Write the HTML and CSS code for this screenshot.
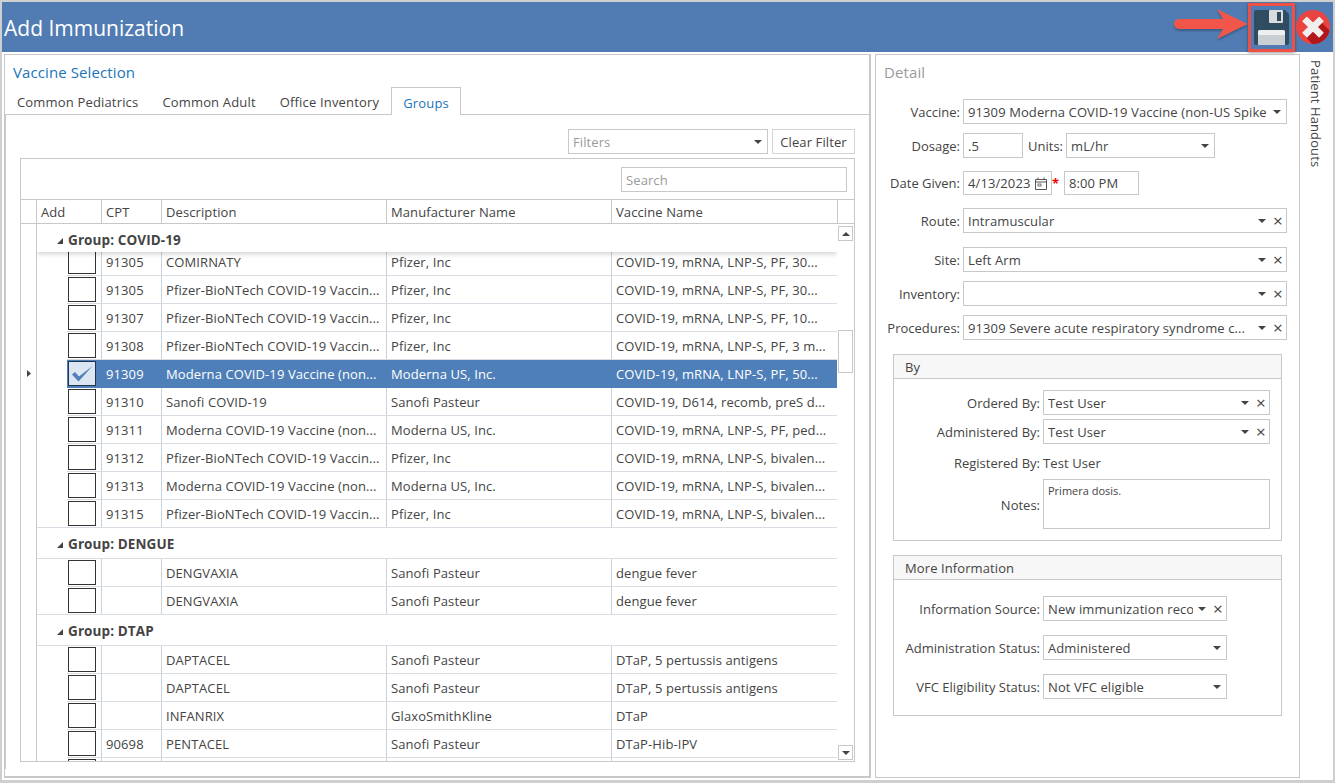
FILE: index.html
```html
<!DOCTYPE html>
<html lang="en">
<head>
<meta charset="utf-8">
<title>Add Immunization</title>
<link rel="stylesheet" href="styles.css">
</head>
<body>
<div class="window">
  <header class="titlebar">
    <h1 class="title">Add Immunization</h1>
    <svg class="arrow" width="74" height="30" viewBox="0 0 74 30"><path d="M5 10H49L43 0L73.5 15L43 30L49 20H5a5 5 0 0 1 0-10Z" fill="#f2564a"/></svg>
    <button class="save" type="button" aria-label="Save">
      <svg width="35" height="35" viewBox="0 0 35 35"><path d="M2 0H31L35 4V33a2 2 0 0 1-2 2H2a2 2 0 0 1-2-2V2a2 2 0 0 1 2-2Z" fill="#2f4c60"/><rect x="15" y="0" width="14" height="13" rx="1" fill="#d8dcdd"/><rect x="23" y="2" width="4" height="9" fill="#2f4c60"/><path d="M4 22a2 2 0 0 1 2-2H29a2 2 0 0 1 2 2V35H4Z" fill="#c9cfd2"/><path d="M4 25V22a2 2 0 0 1 2-2H29a2 2 0 0 1 2 2V25Z" fill="#eef0f0"/></svg>
    </button>
    <svg class="close" width="34" height="34" viewBox="0 0 36 36"><circle cx="18" cy="18" r="18" fill="#e9443f"/><path d="M9 27L17 36H20A18 18 0 0 0 35.6 22L26 12Z" fill="#b3171a"/><path d="M11.5 8L18 14.3L24.5 8L28.5 12L22.2 18L28.5 24.2L24.5 28.2L18 21.9L11.5 28.2L7.5 24.2L13.8 18L7.5 12Z" fill="#f1eeee" stroke="#f1eeee" stroke-width="1.5" stroke-linejoin="round"/></svg>
  </header>
  <div class="content">
    <section class="left">
      <h2 class="panel-title">Vaccine Selection</h2>
      <nav class="tabs">
        <span class="tab">Common Pediatrics</span>
        <span class="tab">Common Adult</span>
        <span class="tab">Office Inventory</span>
        <span class="tab active">Groups</span>
      </nav>
      <div class="tab-body">
        <div class="filters">
          <div class="field filter-select"><span class="ph">Filters</span><i class="caret"></i></div>
          <button class="clear" type="button">Clear Filter</button>
        </div>
        <div class="grid">
          <div class="grid-tools"><div class="field search"><span class="ph">Search</span></div></div>
          <div class="grid-head">
            <span class="h h-ind"></span><span class="h h-add">Add</span><span class="h h-cpt">CPT</span><span class="h h-desc">Description</span><span class="h h-man">Manufacturer Name</span><span class="h h-vac">Vaccine Name</span><span class="h h-sb"></span>
          </div>
          <div class="grid-body">
            <div class="ind-col"><svg class="cur" width="4" height="7" viewBox="0 0 4 7"><path d="M0 0L4 3.5L0 7Z" fill="#444"/></svg></div>
            <div class="rows">
              <div class="group first"><i class="tri"></i>Group: COVID-19</div>
              <div class="row"><span class="c-add"><i class="cb"></i></span><span class="c-cpt">91305</span><span class="c-desc">COMIRNATY</span><span class="c-man">Pfizer, Inc</span><span class="c-vac">COVID-19, mRNA, LNP-S, PF, 30...</span></div>
              <div class="row"><span class="c-add"><i class="cb"></i></span><span class="c-cpt">91305</span><span class="c-desc">Pfizer-BioNTech COVID-19 Vaccin...</span><span class="c-man">Pfizer, Inc</span><span class="c-vac">COVID-19, mRNA, LNP-S, PF, 30...</span></div>
              <div class="row"><span class="c-add"><i class="cb"></i></span><span class="c-cpt">91307</span><span class="c-desc">Pfizer-BioNTech COVID-19 Vaccin...</span><span class="c-man">Pfizer, Inc</span><span class="c-vac">COVID-19, mRNA, LNP-S, PF, 10...</span></div>
              <div class="row"><span class="c-add"><i class="cb"></i></span><span class="c-cpt">91308</span><span class="c-desc">Pfizer-BioNTech COVID-19 Vaccin...</span><span class="c-man">Pfizer, Inc</span><span class="c-vac">COVID-19, mRNA, LNP-S, PF, 3 m...</span></div>
              <div class="row selected"><span class="c-add"><i class="cb on"><svg width="24" height="20" viewBox="0 0 24 20"><path d="M2 10.5L8.5 17.5L22.5 2L9 12.5L5 8Z" fill="#4f7fb8"/></svg></i></span><span class="c-cpt">91309</span><span class="c-desc">Moderna COVID-19 Vaccine (non...</span><span class="c-man">Moderna US, Inc.</span><span class="c-vac">COVID-19, mRNA, LNP-S, PF, 50...</span></div>
              <div class="row"><span class="c-add"><i class="cb"></i></span><span class="c-cpt">91310</span><span class="c-desc">Sanofi COVID-19</span><span class="c-man">Sanofi Pasteur</span><span class="c-vac">COVID-19, D614, recomb, preS d...</span></div>
              <div class="row"><span class="c-add"><i class="cb"></i></span><span class="c-cpt">91311</span><span class="c-desc">Moderna COVID-19 Vaccine (non...</span><span class="c-man">Moderna US, Inc.</span><span class="c-vac">COVID-19, mRNA, LNP-S, PF, ped...</span></div>
              <div class="row"><span class="c-add"><i class="cb"></i></span><span class="c-cpt">91312</span><span class="c-desc">Pfizer-BioNTech COVID-19 Vaccin...</span><span class="c-man">Pfizer, Inc</span><span class="c-vac">COVID-19, mRNA, LNP-S, bivalen...</span></div>
              <div class="row"><span class="c-add"><i class="cb"></i></span><span class="c-cpt">91313</span><span class="c-desc">Moderna COVID-19 Vaccine (non...</span><span class="c-man">Moderna US, Inc.</span><span class="c-vac">COVID-19, mRNA, LNP-S, bivalen...</span></div>
              <div class="row"><span class="c-add"><i class="cb"></i></span><span class="c-cpt">91315</span><span class="c-desc">Pfizer-BioNTech COVID-19 Vaccin...</span><span class="c-man">Pfizer, Inc</span><span class="c-vac">COVID-19, mRNA, LNP-S, bivalen...</span></div>
              <div class="group"><i class="tri"></i>Group: DENGUE</div>
              <div class="row"><span class="c-add"><i class="cb"></i></span><span class="c-cpt"></span><span class="c-desc">DENGVAXIA</span><span class="c-man">Sanofi Pasteur</span><span class="c-vac">dengue fever</span></div>
              <div class="row"><span class="c-add"><i class="cb"></i></span><span class="c-cpt"></span><span class="c-desc">DENGVAXIA</span><span class="c-man">Sanofi Pasteur</span><span class="c-vac">dengue fever</span></div>
              <div class="group"><i class="tri"></i>Group: DTAP</div>
              <div class="row"><span class="c-add"><i class="cb"></i></span><span class="c-cpt"></span><span class="c-desc">DAPTACEL</span><span class="c-man">Sanofi Pasteur</span><span class="c-vac">DTaP, 5 pertussis antigens</span></div>
              <div class="row"><span class="c-add"><i class="cb"></i></span><span class="c-cpt"></span><span class="c-desc">DAPTACEL</span><span class="c-man">Sanofi Pasteur</span><span class="c-vac">DTaP, 5 pertussis antigens</span></div>
              <div class="row"><span class="c-add"><i class="cb"></i></span><span class="c-cpt"></span><span class="c-desc">INFANRIX</span><span class="c-man">GlaxoSmithKline</span><span class="c-vac">DTaP</span></div>
              <div class="row"><span class="c-add"><i class="cb"></i></span><span class="c-cpt">90698</span><span class="c-desc">PENTACEL</span><span class="c-man">Sanofi Pasteur</span><span class="c-vac">DTaP-Hib-IPV</span></div>
              <div class="row"><span class="c-add"><i class="cb"></i></span><span class="c-cpt"></span><span class="c-desc"></span><span class="c-man"></span><span class="c-vac"></span></div>
            </div>
            <div class="scrollbar">
              <span class="sb-btn"><i class="up"></i></span>
              <span class="sb-thumb"></span>
              <span class="sb-btn"><i class="caret"></i></span>
            </div>
          </div>
        </div>
      </div>
    </section>
    <section class="detail">
      <h2 class="detail-title">Detail</h2>
      <div class="form">
        <div class="frow r-vaccine"><label>Vaccine:</label><div class="field f-full"><span class="val">91309 Moderna COVID-19 Vaccine (non-US Spike</span><i class="caret"></i></div></div>
        <div class="frow r-dosage"><label>Dosage:</label><div class="field f-dose"><span class="val">.5</span></div><label class="units">Units:</label><div class="field f-units"><span class="val">mL/hr</span><i class="caret"></i></div></div>
        <div class="frow r-date"><label>Date Given:</label><div class="field f-date"><span class="val">4/13/2023</span><svg class="cal" width="12" height="13" viewBox="0 0 12 13"><path d="M.5 2.5h11v10H.5ZM.5 5h11M3 .5v2M9 .5v2" fill="none" stroke="#555"/><rect x="3" y="7" width="3" height="2" fill="none" stroke="#555" stroke-width=".8"/></svg></div><span class="req">*</span><div class="field f-time"><span class="val">8:00 PM</span></div></div>
        <div class="frow r-route"><label>Route:</label><div class="field f-full"><span class="val">Intramuscular</span><i class="caret"></i><i class="x">×</i></div></div>
        <div class="frow r-site"><label>Site:</label><div class="field f-full"><span class="val">Left Arm</span><i class="caret"></i><i class="x">×</i></div></div>
        <div class="frow r-inv"><label>Inventory:</label><div class="field f-full"><span class="val"></span><i class="caret"></i><i class="x">×</i></div></div>
        <div class="frow r-inv"><label>Procedures:</label><div class="field f-full"><span class="val">91309 Severe acute respiratory syndrome c...</span><i class="caret"></i><i class="x">×</i></div></div>
      </div>
      <fieldset class="box box-by">
        <div class="box-head">By</div>
        <div class="box-body">
          <div class="brow"><label>Ordered By:</label><div class="field f-by"><span class="val">Test User</span><i class="caret"></i><i class="x">×</i></div></div>
          <div class="brow b-adm"><label>Administered By:</label><div class="field f-by"><span class="val">Test User</span><i class="caret"></i><i class="x">×</i></div></div>
          <div class="brow b-reg"><label>Registered By:</label><span class="plain">Test User</span></div>
          <div class="brow b-notes"><label>Notes:</label><div class="notes">Primera dosis.</div></div>
        </div>
      </fieldset>
      <fieldset class="box box-more">
        <div class="box-head">More Information</div>
        <div class="box-body">
          <div class="brow"><label>Information Source:</label><div class="field f-more"><span class="val">New immunization reco</span><i class="caret"></i><i class="x">×</i></div></div>
          <div class="brow b-more"><label>Administration Status:</label><div class="field f-more"><span class="val">Administered</span><i class="caret"></i></div></div>
          <div class="brow b-more"><label>VFC Eligibility Status:</label><div class="field f-more"><span class="val">Not VFC eligible</span><i class="caret"></i></div></div>
        </div>
      </fieldset>
    </section>
    <aside class="handouts"><span>Patient Handouts</span></aside>
  </div>
</div>
</body>
</html>
```
FILE: styles.css
```css
* { box-sizing: border-box; }
html, body { margin: 0; height: 100%; }
body { font-family: "Open Sans", "Noto Sans", sans-serif; font-size: 13px; letter-spacing: .1px; color: #444; background: #fff; overflow: hidden; }
label { letter-spacing: 0; }
.window { width: 1335px; height: 783px; border: 2px solid #cfcfcf; border-bottom-width: 3px; display: flex; flex-direction: column; background: #fff; }
.titlebar { height: 50px; flex: none; background: #517cb3; display: flex; align-items: center; padding-left: 2px; }
.title { margin: 0; padding-top: 2px; font-size: 21px; letter-spacing: 0; font-weight: 400; color: #fff; flex: 1; }
.arrow { align-self: flex-start; margin-top: 7px; filter: drop-shadow(0 2px 1px rgba(0,0,0,.25)); }
.save { width: 47px; height: 49px; padding: 0; margin-top: 1px; background: #517cb3; border: 3px solid #ee5046; display: flex; align-items: center; justify-content: center; box-shadow: 0 1px 3px rgba(0,0,0,.4); }
.close { margin: 0 3px 0 1px; }
.content { flex: 1; display: flex; min-height: 0; padding: 2px 0 0 2px; }
.left { width: 867px; height: 724px; border: 1px solid #c8c8c8; border-right-width: 2px; border-bottom-width: 2px; display: flex; flex-direction: column; }
.panel-title { margin: 0; height: 32px; font-size: 15px; line-height: 35px; font-weight: 400; color: #1a75bb; padding-left: 8px; }
.tabs { height: 27px; display: flex; flex: none; letter-spacing: .17px; }
.tab { height: 27px; padding: 0 12px; line-height: 31px; color: #444; }
.tab.active { color: #1a75bb; background: #fff; border: 1px solid #c8c8c8; border-bottom: 0; padding: 0 11px; line-height: 30px; position: relative; z-index: 1; height: 28px; }
.tab-body { flex: 1; border: 1px solid #c8c8c8; margin: 0 0 7px 0; border-right: 0; border-bottom: 0; padding: 14px 14px 0 14px; display: flex; flex-direction: column; min-height: 0; }
.filters { display: flex; justify-content: flex-end; gap: 4px; height: 25px; margin-bottom: 4px; flex: none; }
.field { position: relative; display: flex; align-items: center; border: 1px solid #c8c8c8; background: #fff; height: 25px; padding: 0 5px 0 4px; }
.ph { color: #9a9a9a; }
.filter-select { width: 200px; }
.clear { width: 83px; height: 25px; padding: 0; background: #fff; border: 1px solid #d4d4d4; font: inherit; letter-spacing: inherit; color: #444; }
.caret { display: block; width: 0; height: 0; border: 4px solid transparent; border-top: 4px solid #444; border-bottom: 0; flex: none; margin-left: auto; }
.grid { width: 835px; height: 604px; border: 1px solid #c8c8c8; display: flex; flex-direction: column; overflow: hidden; }
.grid-tools { height: 41px; display: flex; justify-content: flex-end; padding: 8px 7px 0 0; flex: none; border-bottom: 1px solid #c8c8c8; }
.search { width: 226px; }
.grid-head { height: 24px; display: flex; border-bottom: 1px solid #c8c8c8; flex: none; }
.h { border-right: 1px solid #c8c8c8; padding-left: 4px; line-height: 24px; }
.h-ind { width: 16px; }
.h-add { width: 65px; }
.h-cpt { width: 60px; }
.h-desc { width: 225px; }
.h-man { width: 225px; }
.h-vac { width: 226px; }
.h-sb { flex: 1; border-right: 0; }
.grid-body { flex: 1; display: flex; min-height: 0; }
.ind-col { width: 16px; flex: none; border-right: 1px solid #c8c8c8; position: relative; }
.cur { position: absolute; left: 6px; top: 146px; }
.rows { width: 800px; flex: none; overflow: hidden; }
.group { height: 32px; margin-top: -1px; padding-left: 20px; padding-top: 5px; line-height: 22px; font-weight: 700; font-size: 13.5px; color: #444; border-top: 1px solid #d8dde4; border-bottom: 1px solid #d8dde4; background: #fff; position: relative; }
.group.first { height: 28px; margin: 0 0 -4px; border: 0; z-index: 1; box-shadow: 0 2px 5px rgba(0,0,0,.18); }
.tri { display: inline-block; width: 0; height: 0; border-left: 6px solid transparent; border-bottom: 6px solid #444; margin-right: 5px; vertical-align: 1px; }
.row { height: 28px; margin-left: 30px; display: flex; line-height: 29px; border-bottom: 1px solid #d8dde4; white-space: nowrap; }
.row > span { display: block; padding-left: 4px; border-right: 1px solid #c9d2de; overflow: hidden; }
.c-add { width: 35px; padding: 0 !important; }
.c-cpt { width: 60px; }
.c-desc { width: 225px; }
.c-man { width: 225px; }
.c-vac { width: 225px; border-right: 0 !important; }
.cb { display: block; width: 28px; height: 25px; border: 1px solid #333; background: #fff; margin: 1px 0 0 1px; }
.selected { background: #4f7fb8; color: #fff; border-bottom-color: #4f7fb8; }
.selected > span { border-right-color: #4f7fb8; }
.cb.on { background: #dce6f2; border-color: #1f3550; display: flex; align-items: center; justify-content: center; }
.scrollbar { flex: 1; display: flex; flex-direction: column; align-items: flex-start; padding: 2px 0 1px 1px; position: relative; }
.sb-btn { width: 15px; height: 15px; border: 1px solid #c8c8c8; display: flex; align-items: center; justify-content: center; flex: none; }
.sb-btn .caret { margin: 0; }
.up { display: block; width: 0; height: 0; border: 4px solid transparent; border-bottom: 4px solid #444; border-top: 0; }
.sb-thumb { position: absolute; left: 1px; top: 106px; width: 15px; height: 43px; border: 1px solid #c8c8c8; background: #fff; }
.sb-btn:last-child { margin-top: auto; }
.detail { width: 425px; height: 724px; margin-left: 4px; border: 1px solid #c8c8c8; }
.detail-title { margin: 0; height: 44px; font-size: 15px; line-height: 35px; font-weight: 400; color: #9a9a9a; padding-left: 8px; }
.form { display: flex; flex-direction: column; }
.frow { display: flex; align-items: center; height: 25px; }
.frow > label:first-child { width: 87px; text-align: right; padding-right: 3px; flex: none; white-space: nowrap; }
.f-full { width: 324px; }
.val { white-space: nowrap; overflow: hidden; flex: 1; min-width: 0; }
.f-full .val { margin-right: 6px; }
.x { font-style: normal; font-size: 17px; line-height: 1; width: 14px; text-align: center; color: #444; flex: none; margin-left: 5px; margin-right: -4px; }
.r-dosage { margin-top: 9px; }
.r-date { margin-top: 13px; height: 24px; }
.r-route { margin-top: 13px; }
.r-site { margin-top: 14px; }
.r-inv { margin-top: 9px; }
.f-dose { width: 60px; }
.units { width: 43px; text-align: right; padding-right: 3px; }
.f-units { width: 149px; }
.f-date { width: 89px; height: 24px; }
.cal { flex: none; margin-left: auto; margin-right: -1px; }
.req { color: #e00; width: 12px; font-weight: 700; }
.f-time { width: 75px; height: 24px; }
.box { margin: 0; padding: 0; border: 1px solid #c8c8c8; width: 389px; margin-left: 17px; min-width: 0; }
.box-by { margin-top: 14px; height: 187px; }
.box-more { margin-top: 14px; height: 161px; }
.box-head { height: 24px; background: #f7f7f7; border-bottom: 1px solid #c8c8c8; padding-left: 11px; line-height: 25px; }
.box-body { padding-top: 11px; }
.box-more .box-body { padding-top: 16px; }
.brow { display: flex; align-items: center; min-height: 25px; }
.brow > label { width: 149px; text-align: right; padding-right: 3px; flex: none; white-space: nowrap; }
.f-by { width: 227px; }
.b-adm { margin-top: 4px; }
.b-reg { margin-top: 6px; height: 25px; }
.b-notes { margin-top: 4px; }
.b-notes label { padding-top: 2px; }
.notes { width: 227px; height: 50px; border: 1px solid #c8c8c8; padding: 3px 4px; font-size: 11px; letter-spacing: 0; line-height: 16px; }
.f-more { width: 184px; }
.f-more .val { margin-right: 5px; }
.b-more { margin-top: 14px; }
.handouts { flex: 1; }
.handouts span { writing-mode: vertical-rl; display: block; margin: 6px 0 0 7px; }
```
